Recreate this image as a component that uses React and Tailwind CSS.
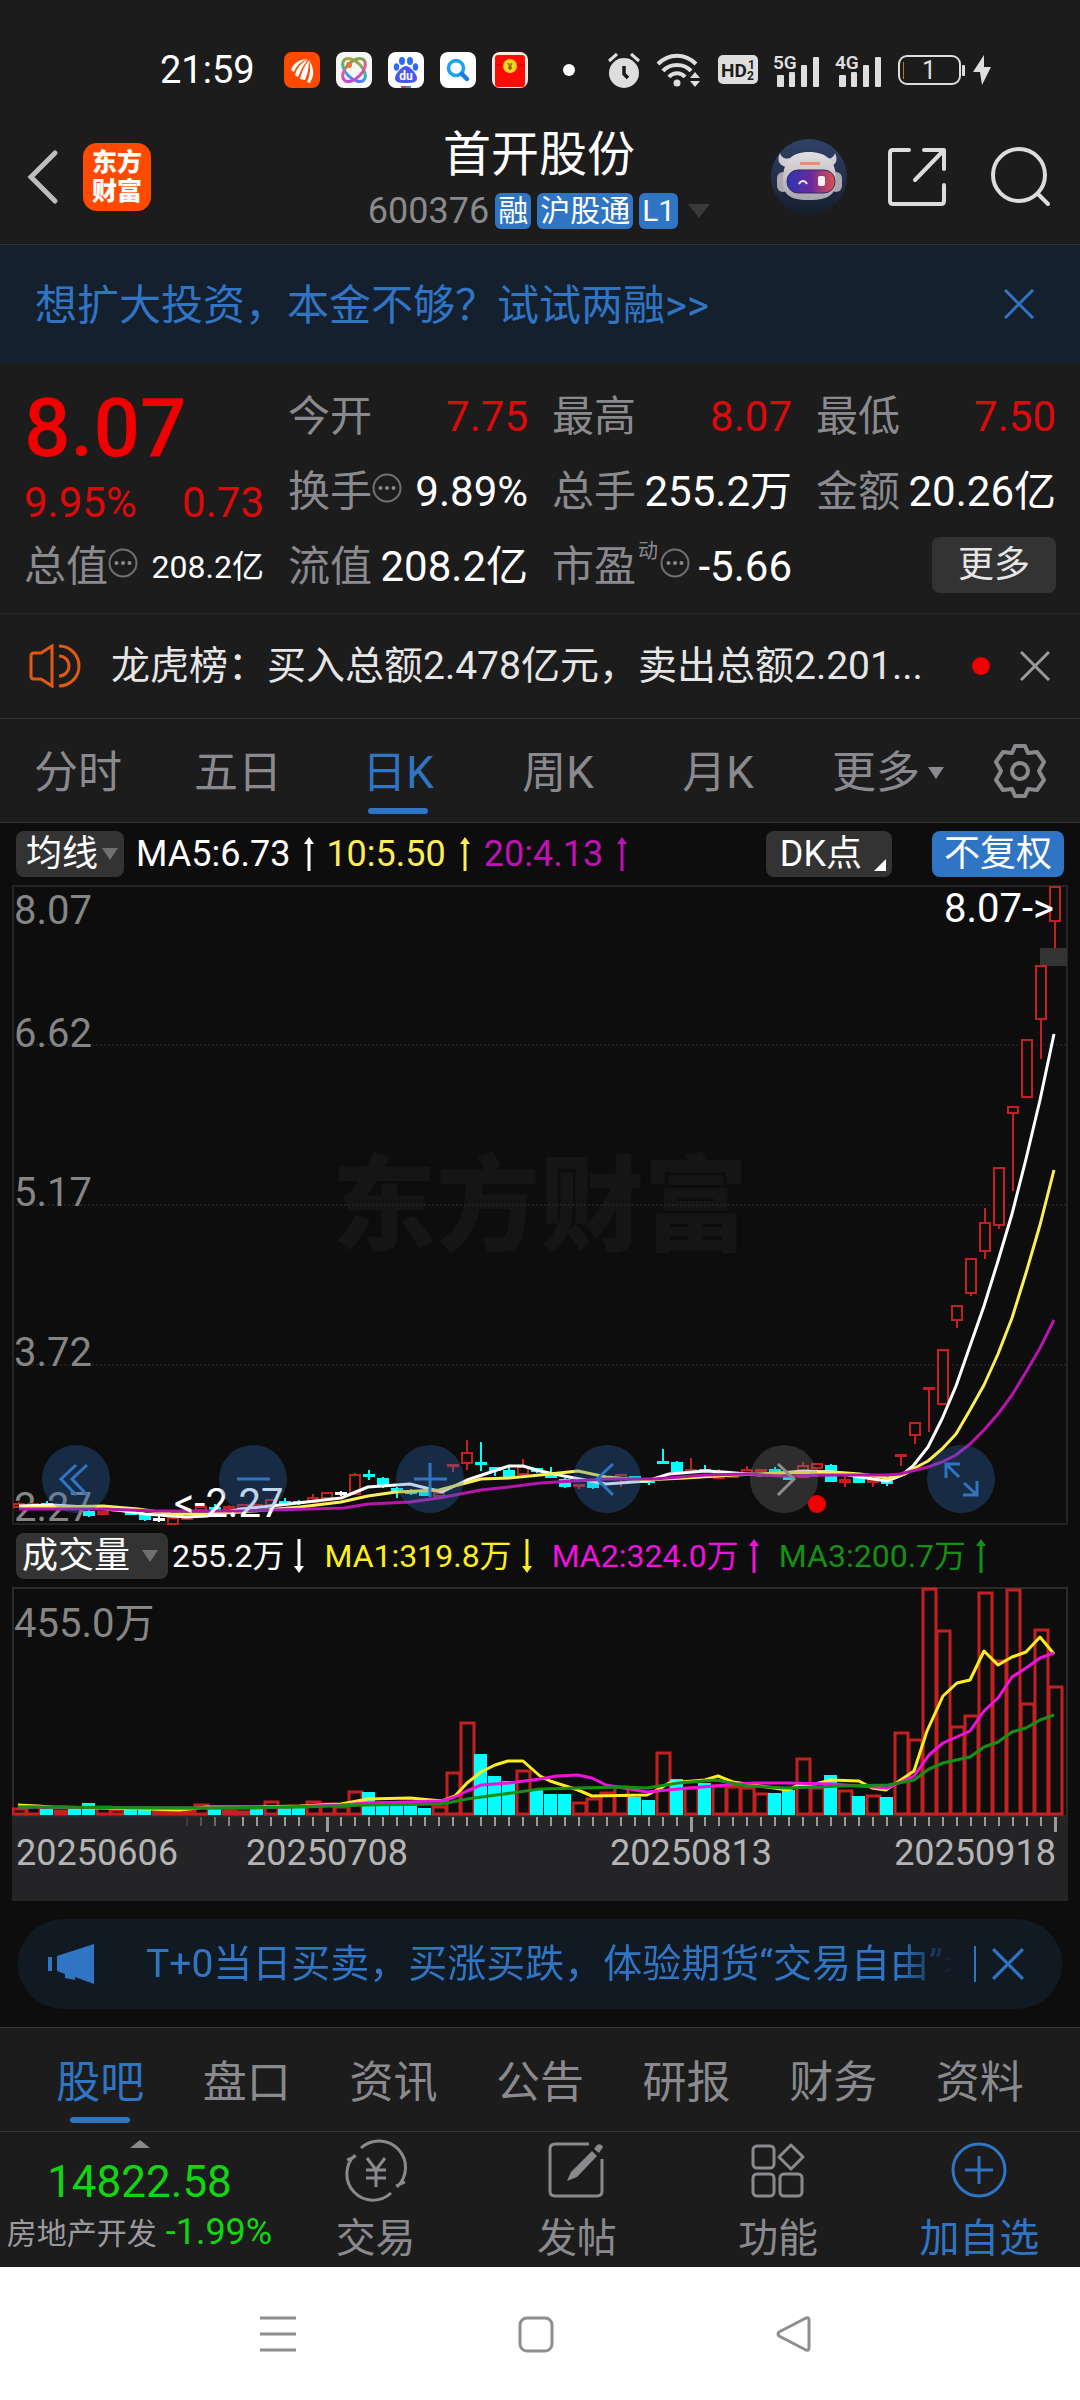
import React, { useState } from "react";

// Candles: kind (r = up, c = down, w = flat), body top, body bottom, high, low
const CANDLES = [
  ["r", 619, 622, 617, 623], ["r", 619, 620, 619, 621], ["c", 619, 620, 616, 621], ["r", 621, 622, 620, 623],
  ["r", 621, 622, 620, 623], ["c", 627, 630, 625, 632], ["r", 627, 629, 626, 630], ["r", 625, 626, 624, 627],
  ["c", 628, 629, 627, 630], ["c", 630, 634, 629, 636], ["w", 634, 635, 631, 637], ["r", 633, 639, 632, 639],
  ["r", 633, 634, 632, 635], ["r", 622, 625, 621, 626], ["c", 623, 624, 619, 626], ["r", 622, 624, 620, 625],
  ["r", 620, 623, 619, 624], ["r", 620, 622, 619, 623], ["r", 615, 620, 614, 621], ["c", 617, 618, 613, 620],
  ["c", 617, 618, 615, 620], ["r", 613, 617, 609, 618], ["r", 608, 613, 607, 613], ["w", 608, 609, 606, 611],
  ["r", 590, 609, 588, 610], ["c", 590, 591, 585, 595], ["c", 594, 599, 592, 603], ["c", 604, 607, 602, 613],
  ["c", 606, 608, 604, 610], ["c", 608, 610, 606, 611], ["r", 608, 611, 607, 612], ["r", 580, 581, 579, 587],
  ["r", 568, 578, 555, 585], ["c", 578, 579, 557, 586], ["c", 583, 585, 582, 591], ["c", 586, 592, 581, 592],
  ["r", 582, 589, 574, 590], ["c", 584, 586, 583, 588], ["c", 589, 592, 582, 593], ["c", 595, 601, 593, 603],
  ["r", 600, 601, 599, 604], ["c", 598, 602, 597, 604], ["r", 592, 594, 591, 595], ["r", 590, 594, 589, 602],
  ["c", 592, 594, 591, 595], ["c", 596, 597, 595, 600], ["c", 577, 578, 564, 579], ["c", 578, 586, 576, 586],
  ["r", 585, 586, 573, 586], ["c", 585, 586, 580, 587], ["r", 589, 593, 584, 594], ["r", 591, 592, 590, 593],
  ["r", 585, 588, 581, 588], ["r", 585, 586, 585, 587], ["c", 585, 586, 582, 588], ["c", 592, 594, 591, 595],
  ["r", 581, 592, 577, 593], ["r", 579, 583, 578, 592], ["c", 581, 596, 579, 597], ["r", 595, 597, 591, 602],
  ["c", 592, 597, 591, 598], ["r", 595, 597, 594, 602], ["c", 597, 598, 594, 601], ["r", 570, 571, 569, 581],
  ["r", 538, 550, 538, 559], ["r", 503, 504, 503, 547], ["r", 465, 519, 465, 519], ["r", 421, 435, 421, 443],
  ["r", 374, 408, 374, 411], ["r", 338, 366, 323, 374], ["r", 283, 340, 283, 344], ["r", 222, 228, 222, 306],
  ["r", 155, 212, 155, 212], ["r", 81, 134, 81, 174], ["r", 2, 36, 2, 63],
];

const VOLUMES = [
  7, 10, 6, 5, 6, 12, 9, 6, 5, 5, 4, 5, 5, 11, 6, 5, 4, 6, 14, 7, 7, 14, 12, 9, 24, 23, 13, 12, 10, 7, 9, 43, 93, 61,
  39, 34, 45, 26, 21, 21, 13, 17, 23, 29, 18, 15, 63, 36, 28, 32, 30, 29, 28, 22, 22, 25, 57, 28, 40, 25, 19, 20, 18,
  83, 76, 227, 185, 89, 100, 223, 155, 226, 112, 186, 129,
];
const DOWN_VOLUMES = [2, 4, 5, 8, 9, 14, 17, 19, 20, 25, 26, 27, 28, 29, 33, 34, 35, 37, 38, 39, 44, 45, 47, 49, 54, 55, 58, 60, 62];

const MA5 = "7,621 40,620 74,622 105,625 133,629 174,632 195,631 229,624 277,619 329,613 356,602 398,599 430,607 455,595 497,581 511,581 528,586 552,591 594,599 635,596 657,589 693,586 711,587 748,590 791,586 819,587 848,592 875,596 890,590 901,581 916,562 930,534 944,501 958,461 972,421 986,376 1000,329 1014,274 1028,215 1042,149";
const MA10 = "7,623 40,622 91,621 126,624 160,629 195,629 229,627 288,622 329,617 356,611 384,607 427,605 469,594 497,593 528,590 566,586 594,592 631,595 673,593 721,590 769,588 821,587 848,589 876,593 893,589 901,584 916,576 930,564 944,549 958,525 972,500 986,469 1000,433 1014,388 1028,340 1042,285";
const MA20 = "7,624 91,624 143,626 229,626 298,624 332,623 356,619 398,617 427,613 469,605 497,602 528,598 594,594 642,594 693,590 735,589 769,591 821,590 874,590 888,589 916,582 930,577 944,570 958,559 972,545 986,529 1000,510 1014,487 1028,463 1042,435";

const VMA1 = "6,218 40,220 136,222 167,223 195,220 246,220 288,219 329,217 356,212 398,211 430,214 443,209 455,196 469,185 483,178 496,174 511,174 528,189 538,194 566,203 580,209 635,208 649,201 657,196 693,193 706,189 721,195 748,199 776,203 786,198 803,197 819,193 847,194 860,201 874,203 902,184 915,144 931,109 945,96 958,93 972,64 986,78 1000,70 1014,65 1028,50 1042,67";
const VMA2 = "6,220 136,221 243,221 329,218 356,216 430,214 443,210 455,204 469,198 497,196 528,192 545,189 566,188 580,191 594,198 635,205 666,202 714,198 741,196 776,196 819,197 876,201 902,189 917,168 931,156 958,144 972,124 986,111 1000,90 1014,81 1028,71 1042,66";
const VMA3 = "6,220 195,221 288,220 356,218 430,217 455,212 477,209 528,202 607,200 635,201 666,196 704,193 735,199 776,201 831,199 876,198 902,193 917,182 931,176 958,170 972,160 986,155 1000,145 1014,141 1028,133 1042,128";

const COLORS = { r: "#c42020", c: "#00ffff", w: "#ffffff" };
const xAt = (i) => 7 + i * 14;

const CloseIcon = ({ size = 30, color = "#3074c4" }) => (
  <svg width={size} height={size} viewBox="0 0 30 30" fill="none" stroke={color} strokeWidth="3">
    <path d="M1 1L29 29M29 1L1 29" />
  </svg>
);

const MoreDot = () => (
  <svg className="mb-2 shrink-0" width="30" height="30" viewBox="0 0 30 30">
    <circle cx="15" cy="15" r="13.5" fill="none" stroke="#707074" strokeWidth="2" />
    <circle cx="8.5" cy="15" r="2" fill="#8a8a8e" />
    <circle cx="15" cy="15" r="2" fill="#8a8a8e" />
    <circle cx="21.5" cy="15" r="2" fill="#8a8a8e" />
  </svg>
);

const Caret = ({ className, up }) => (
  <svg className={className} viewBox="0 0 16 12" preserveAspectRatio="none" fill="currentColor">
    <path d={up ? "M0 12L8 0L16 12Z" : "M0 0L8 12L16 0Z"} />
  </svg>
);

const Arrow = ({ down }) => (
  <svg className="shrink-0" width="10" height="34" viewBox="0 0 10 34">
    {down ? (
      <path d="M3.5 0H6.5V27H10L5 34L0 27H3.5Z" fill="currentColor" />
    ) : (
      <path d="M3.5 34H6.5V7H10L5 0L0 7H3.5Z" fill="currentColor" />
    )}
  </svg>
);

const Signal = ({ label }) => (
  <svg className="overflow-visible" width="46" height="40" viewBox="0 0 46 40" fill="#dedede">
    <text x="-1" y="19" fontSize="19" fontWeight="600" fontFamily="Roboto, sans-serif">{label}</text>
    <rect x="3" y="25" width="7" height="12" rx="1" />
    <rect x="15" y="22" width="6" height="15" rx="1" />
    <rect x="27" y="15" width="6" height="22" rx="1" />
    <rect x="39" y="7" width="6" height="30" rx="1" />
  </svg>
);

const StatusBar = () => (
  <div className="flex items-center pt-[30px] h-[110px] pl-[160px] pr-[88px]">
    <span className="text-[38px] leading-[40px] text-white w-[124px]">21:59</span>
    <div className="flex items-center gap-4">
      <svg width="36" height="36" viewBox="0 0 36 36">
        <rect width="36" height="36" rx="8" fill="#ff4a00" />
        <path d="M7 18Q10 8 23 7Q13 11 10 20ZM11 23Q13 13 24 7Q18 15 14 25ZM16 27Q18 17 25 8Q25 19 21 28ZM23 30Q28 19 25 8Q33 20 26 31Z" fill="#fff" />
      </svg>
      <svg width="36" height="36" viewBox="0 0 36 36">
        <defs>
          <linearGradient id="swirl" x1="0" y1="0" x2="1" y2="1">
            <stop offset="0" stopColor="#ff8a1e" />
            <stop offset=".45" stopColor="#38c172" />
            <stop offset=".7" stopColor="#2aa6ea" />
            <stop offset="1" stopColor="#8a4df0" />
          </linearGradient>
          <linearGradient id="swirl2" x1="0" y1="1" x2="1" y2="0">
            <stop offset="0" stopColor="#b23ee8" />
            <stop offset=".5" stopColor="#e85aa0" />
            <stop offset="1" stopColor="#45cc30" />
          </linearGradient>
        </defs>
        <rect width="36" height="36" rx="8" fill="#f7f6f8" />
        <ellipse cx="18" cy="18" rx="14" ry="8" transform="rotate(46 18 18)" fill="none" stroke="url(#swirl)" strokeWidth="3" />
        <ellipse cx="18" cy="18" rx="14" ry="8" transform="rotate(-46 18 18)" fill="none" stroke="url(#swirl2)" strokeWidth="3" />
        <circle cx="13" cy="13" r="3" fill="#e8743a" />
      </svg>
      <svg width="36" height="36" viewBox="0 0 36 36">
        <rect width="36" height="36" rx="8" fill="#fff" />
        <g fill="#2b6cf0">
          <ellipse cx="14" cy="9" rx="3" ry="4" />
          <ellipse cx="22" cy="9" rx="3" ry="4" />
          <ellipse cx="8.5" cy="15" rx="2.7" ry="3.7" />
          <ellipse cx="27.5" cy="15" rx="2.7" ry="3.7" />
          <path d="M18 14C22 14 29 22 29 26C29 30 26 31 18 31C10 31 7 30 7 26C7 22 14 14 18 14Z" fill="#4a58ee" />
        </g>
        <text x="18" y="28" textAnchor="middle" fontSize="12" fontWeight="700" fill="#fff" fontFamily="Roboto, sans-serif">du</text>
        <rect x="13" y="34" width="5" height="2" fill="#c04848" />
        <rect x="18" y="34" width="5" height="2" fill="#4888c8" />
      </svg>
      <svg width="36" height="36" viewBox="0 0 36 36">
        <rect width="36" height="36" rx="8" fill="#fff" />
        <circle cx="16" cy="16" r="7.5" fill="none" stroke="#18a2f2" strokeWidth="3.5" />
        <path d="M22 22L27 27" stroke="#187ae8" strokeWidth="4.5" strokeLinecap="round" />
      </svg>
      <svg width="36" height="36" viewBox="0 0 36 36">
        <rect width="36" height="36" rx="8" fill="#ffe9e0" />
        <rect x="3" y="3" width="30" height="32" rx="3" fill="#fb0d05" />
        <path d="M3 13H33" stroke="#d80000" />
        <circle cx="18" cy="14" r="7" fill="#fbd81a" />
        <text x="18" y="18" textAnchor="middle" fontSize="9" fontWeight="700" fill="#8a5a00" fontFamily="Roboto, sans-serif">¥</text>
      </svg>
    </div>
    <div className="flex-1 flex items-center justify-end gap-4">
      <span className="w-3 h-3 rounded-full bg-white mr-[17px]" />
      <svg width="32" height="36" viewBox="0 0 32 36">
        <circle cx="16" cy="21" r="15" fill="#dedede" />
        <path d="M1 9L9 2M31 9L23 2" stroke="#dedede" strokeWidth="3" />
        <path d="M16 14V22L20 26" fill="none" stroke="#1c1c1c" strokeWidth="3.5" />
      </svg>
      <svg width="46" height="36" viewBox="0 0 46 36" fill="none" stroke="#dedede" strokeWidth="4">
        <path d="M2 12C13 1 29 1 40 12M7 19C14 11 28 11 35 19M13 25C17 20 25 20 29 25" />
        <circle cx="21" cy="31" r="3.5" fill="#dedede" stroke="none" />
        <path d="M34 26L39 20L44 26ZM34 29L39 35L44 29Z" fill="#dedede" stroke="none" />
      </svg>
      <svg width="40" height="30" viewBox="0 0 40 30" fontFamily="Roboto, sans-serif" fontWeight="700" fill="#1c1c1c">
        <rect width="40" height="29" rx="5" fill="#dedede" />
        <text x="3" y="22" fontSize="19">HD</text>
        <text x="30" y="14" fontSize="12">1</text>
        <text x="29" y="25" fontSize="12">2</text>
      </svg>
      <Signal label="5G" />
      <Signal label="4G" />
      <div className="flex items-center gap-[6px]">
        <svg width="68" height="32" viewBox="0 0 68 32">
          <rect x="1" y="2" width="61" height="28" rx="8" fill="none" stroke="#dedede" strokeWidth="2" />
          <rect x="5" y="8" width="1" height="17" fill="#b08020" />
          <rect x="64" y="11" width="3" height="11" rx="1" fill="#dedede" />
          <text x="31" y="25" textAnchor="middle" fontSize="25" fill="#dedede" fontFamily="Roboto, sans-serif">1</text>
        </svg>
        <svg width="20" height="32" viewBox="0 0 20 32">
          <path d="M12 1L1 18H8L10 31L19 13H12Z" fill="#dedede" />
        </svg>
      </div>
    </div>
  </div>
);

const Header = () => (
  <header className="grid grid-cols-[1fr_auto_1fr] items-center h-[135px] pl-[27px] pr-[29px] border-b border-[#333]">
    <div className="flex items-center gap-6">
      <button aria-label="返回">
        <svg width="32" height="56" viewBox="0 0 32 56" fill="none" stroke="#bdbdbd" strokeWidth="5" strokeLinecap="round">
          <path d="M28 4L4 28L28 52" />
        </svg>
      </button>
      <a href="#home" className="grid place-content-center w-[68px] h-[68px] rounded-[14px] bg-[#ff4a00] text-white text-[25px] leading-[29px] font-black">
        <span>东方</span>
        <span>财富</span>
      </a>
    </div>
    <div className="flex flex-col items-center gap-3 pt-1">
      <h1 className="text-[48px] leading-[52px] text-white">首开股份</h1>
      <div className="flex items-center gap-[6px] text-[30px] leading-9 text-white">
        <span className="text-[36px] text-[#8a8a8e]">600376</span>
        <span className="bg-[#3074c4] rounded-md px-[3px]">融</span>
        <span className="bg-[#3074c4] rounded-md px-[3px]">沪股通</span>
        <span className="bg-[#3074c4] rounded-md px-[3px]">L1</span>
        <Caret className="w-[22px] h-[14px] ml-1 text-[#3a3a3a]" />
      </div>
    </div>
    <div className="flex items-center justify-end gap-10">
      <button aria-label="智能助手">
        <svg width="76" height="76" viewBox="0 0 76 76">
          <defs>
            <linearGradient id="visor" x1="0" y1="0" x2="1" y2="0">
              <stop offset="0" stopColor="#2c35b0" />
              <stop offset=".5" stopColor="#6a2a9c" />
              <stop offset="1" stopColor="#e0504a" />
            </linearGradient>
            <linearGradient id="disc" x1="0" y1="0" x2="0" y2="1">
              <stop offset="0" stopColor="#30426a" />
              <stop offset="1" stopColor="#151d2c" />
            </linearGradient>
            <linearGradient id="shell" x1="0" y1="0" x2="0" y2="1">
              <stop offset="0" stopColor="#e2dfe2" />
              <stop offset="1" stopColor="#a9a5ad" />
            </linearGradient>
          </defs>
          <circle cx="38" cy="38" r="38" fill="url(#disc)" />
          <path d="M18 28C9 28 5 22 9 14C11 20 15 20 21 19ZM55 28C64 28 68 22 64 14C62 20 58 20 52 19Z" fill="#cfccd2" />
          <rect x="6" y="33" width="12" height="20" rx="6" fill="#aaa6b0" />
          <rect x="59" y="33" width="12" height="20" rx="6" fill="#aaa6b0" />
          <path d="M38 13C56 13 64 22 65 38C66 54 60 61 38 61C16 61 11 54 12 38C13 22 20 13 38 13Z" fill="url(#shell)" />
          <rect x="29" y="23" width="20" height="3" rx="1" fill="#d8946a" />
          <rect x="16" y="31" width="48" height="23" rx="11" fill="url(#visor)" stroke="#3a2a60" />
          <path d="M28 45C30 41 34 41 36 45" fill="none" stroke="#e4e4ff" strokeWidth="2" />
          <rect x="47" y="37" width="7" height="10" rx="2" fill="#fff0f4" />
        </svg>
      </button>
      <button aria-label="分享">
        <svg width="62" height="60" viewBox="0 0 62 60" fill="none" stroke="#dcdcdc" strokeWidth="4" strokeLinecap="round" strokeLinejoin="round">
          <path d="M22 3H6Q3 3 3 6V54Q3 57 6 57H54Q57 57 57 54V38M37 3H57V22M57 3L28 33" />
        </svg>
      </button>
      <button aria-label="搜索">
        <svg width="62" height="62" viewBox="0 0 62 62" fill="none" stroke="#dcdcdc" strokeWidth="4" strokeLinecap="round">
          <circle cx="30" cy="29" r="26" />
          <path d="M49 48L59 58" />
        </svg>
      </button>
    </div>
  </header>
);

const Stat = ({ label, value, info, sup, red, small }) => (
  <div className="flex items-center justify-between">
    <span className="flex items-center text-[#8a8a8e] whitespace-nowrap">
      {label}
      {sup && <sup className="text-[20px] leading-6 -top-4 px-[2px]">{sup}</sup>}
      {info && <MoreDot />}
    </span>
    <span className={`whitespace-nowrap ${red ? "text-[#dc0a0a]" : "text-white"} ${small ? "text-[32px]" : ""}`}>{value}</span>
  </div>
);

const Quote = () => (
  <section className="grid grid-cols-4 auto-rows-[75px] gap-x-6 px-6 pt-4 pb-[9px] text-[42px] leading-[52px] border-b border-[#282828]">
    <div className="row-span-2 flex flex-col pt-1">
      <strong className="text-[82px] leading-[90px] font-medium text-[#f00000]">8.07</strong>
      <div className="flex justify-between pt-1 text-[#dc0a0a]">
        <span>9.95%</span>
        <span>0.73</span>
      </div>
    </div>
    <Stat label="今开" value="7.75" red />
    <Stat label="最高" value="8.07" red />
    <Stat label="最低" value="7.50" red />
    <Stat label="换手" value="9.89%" info />
    <Stat label="总手" value="255.2万" />
    <Stat label="金额" value="20.26亿" />
    <Stat label="总值" value="208.2亿" info small />
    <Stat label="流值" value="208.2亿" />
    <Stat label="市盈" value="-5.66" sup="动" info />
    <button className="self-center justify-self-end w-[124px] h-14 mb-1 rounded-lg bg-[#333] text-[#e6e6e6] text-[36px]">更多</button>
  </section>
);

const PERIODS = ["分时", "五日", "日K", "周K", "月K", "更多"];

const PeriodTabs = () => {
  const [active, setActive] = useState("日K");
  return (
    <nav className="grid grid-cols-[repeat(6,4fr)_3fr] h-[104px] text-[44px] border-b border-[#333]">
      {PERIODS.map((name) => (
        <button
          key={name}
          onClick={() => setActive(name)}
          className={`relative flex items-center justify-center gap-2 pt-1 pr-1 ${name === active ? "text-[#3074c4]" : "text-[#8a8a8e]"} ${name === "更多" ? "pl-5" : ""}`}
        >
          {name}
          {name === "更多" && <Caret className="w-4 h-3" />}
          {name === active && <span className="absolute bottom-2 w-[60px] h-[6px] rounded-full bg-[#3074c4]" />}
        </button>
      ))}
      <button aria-label="设置" className="flex items-center justify-center">
        <svg width="56" height="56" viewBox="-28 -28 56 56" fill="none" stroke="#8a8a8e" strokeWidth="4" strokeLinejoin="round">
          <path d="M-5 -25H5L8 -18L17 -19L24 -9L19 0L24 9L17 19L8 18L5 25H-5L-8 18L-17 19L-24 9L-19 0L-24 -9L-17 -19L-8 -18Z" />
          <circle r="8" />
        </svg>
      </button>
    </nav>
  );
};

const PriceChart = () => (
  <svg viewBox="0 0 1056 640" className="block w-full overflow-visible" fontFamily="Roboto, sans-serif" fontSize="40">
    <text x="528" y="358" textAnchor="middle" fontSize="104" fontWeight="900" fill="#151515" fontFamily="'Noto Sans CJK SC', sans-serif">东方财富</text>
    <rect x="1" y="1" width="1054" height="638" fill="none" stroke="#242424" strokeWidth="2" />
    {[160, 320, 480].map((y) => (
      <path key={y} d={`M0 ${y}H1056`} stroke="#303030" strokeDasharray="2 2" />
    ))}
    <g fill="#858585">
      <text x="2" y="39">8.07</text>
      <text x="2" y="162">6.62</text>
      <text x="2" y="321">5.17</text>
      <text x="2" y="481">3.72</text>
      <text x="2" y="636">2.27</text>
    </g>
    <rect x="1028" y="63" width="27" height="18" fill="#333" />
    {CANDLES.map(([kind, top, bottom, high, low], i) => (
      <g key={i} stroke={COLORS[kind]} strokeWidth="2" fill={kind === "r" ? "#0d0d0d" : COLORS[kind]}>
        <path d={`M${xAt(i)} ${high}V${low}`} />
        <rect x={xAt(i) - 5} y={top} width="10" height={bottom - top} />
      </g>
    ))}
    <g fill="none" strokeWidth="3" strokeLinejoin="round">
      <polyline points={MA5} stroke="#ffffff" />
      <polyline points={MA10} stroke="#fdee58" />
      <polyline points={MA20} stroke="#b515ad" />
    </g>
    <g fill="#ffffff">
      <text x="1042" y="37" textAnchor="end">8.07-&gt;</text>
      <text x="162" y="632">&lt;-2.27</text>
    </g>
  </svg>
);

const VolumeChart = () => (
  <svg viewBox="0 0 1056 230" className="block w-full">
    <rect x="1" y="1" width="1054" height="228" fill="none" stroke="#2a2a2a" strokeWidth="2" />
    {VOLUMES.map((v, i) =>
      DOWN_VOLUMES.includes(i) ? (
        <rect key={i} x={xAt(i) - 7} y={228 - v} width="13" height={v} fill="#00ffff" />
      ) : (
        <rect key={i} x={xAt(i) - 6} y={229 - v} width="13" height={v - 2} fill="none" stroke="#c42020" strokeWidth="3" />
      )
    )}
    <g fill="none" strokeWidth="3" strokeLinejoin="round">
      <polyline points={VMA1} stroke="#fdee20" />
      <polyline points={VMA2} stroke="#ee12dc" />
      <polyline points={VMA3} stroke="#159015" />
    </g>
    <text x="2" y="50" fontSize="40" fill="#858585" fontFamily="Roboto, 'Noto Sans CJK SC', sans-serif">455.0万</text>
  </svg>
);

const DateAxis = () => (
  <svg viewBox="0 0 1056 84" className="block w-full bg-[#242426]" fontFamily="Roboto, sans-serif" fontSize="36">
    {CANDLES.map((_, i) => {
      if (i < 12) return null;
      const major = i === 22 || i === 48 || i === 74;
      return (
        <rect key={i} x={xAt(i) - 1} y="0" width={major ? 3 : 2} height={major ? 15 : 9} fill="#9a9a9a" opacity={Math.min(1, (i - 11) / 5)} />
      );
    })}
    <g fill="#b4b4b4">
      <text x="4" y="48">20250606</text>
      <text x="315" y="48" textAnchor="middle">20250708</text>
      <text x="679" y="48" textAnchor="middle">20250813</text>
      <text x="1044" y="48" textAnchor="end">20250918</text>
    </g>
  </svg>
);

const TOOLS = [
  { name: "最早", d: "M34 20L19 34L34 50M45 20L30 34L45 50" },
  { name: "缩小", d: "M18 34H51" },
  { name: "放大", d: "M18 34H51M34 18V52" },
  { name: "左移", d: "M40 19L24 34L40 50" },
  { name: "右移", d: "M28 19L44 34L28 50", off: true },
  { name: "全屏", d: "M19 33V19H33M19 19L32 32M50 36V50H36M50 50L37 38" },
];

const ChartTools = () => (
  <div className="absolute bottom-[12px] left-[30px] right-[73px] flex justify-between">
    {TOOLS.map((tool) => (
      <button
        key={tool.name}
        aria-label={tool.name}
        className={`relative w-[68px] h-[68px] rounded-full ${tool.off ? "bg-[#787878]/30" : "bg-[#3074c4]/30"}`}
      >
        <svg width="68" height="68" viewBox="0 0 68 68" fill="none" stroke={tool.off ? "#8e8e8e" : "#3074c4"} strokeWidth="3">
          <path d={tool.d} />
        </svg>
        {tool.off && <span className="absolute bottom-0 -right-2 w-[18px] h-[18px] rounded-full bg-[#f00000]" />}
      </button>
    ))}
  </div>
);

const ChartPanel = () => (
  <section className="bg-[#0d0d0d] px-3 pt-2 pb-[18px]">
    <div className="flex items-center justify-between pl-1 pr-1 mb-2 text-[36px] leading-[46px] text-white whitespace-nowrap">
      <div className="flex items-center gap-3">
        <button className="flex items-center gap-1 pl-[10px] pr-[6px] rounded-lg bg-[#333]">
          均线
          <Caret className="w-4 h-3 text-[#707070]" />
        </button>
        <span className="flex items-center gap-[14px]">MA5:6.73 <Arrow /></span>
        <span className="flex items-center gap-[14px] text-[#fdee58]">10:5.50 <Arrow /></span>
        <span className="flex items-center gap-[14px] pl-[2px] text-[#c012b4]">20:4.13 <Arrow /></span>
      </div>
      <div className="flex items-center gap-10">
        <button className="flex items-end gap-3 px-[14px] pr-[6px] rounded-lg bg-[#333]">
          DK点
          <svg className="mb-[6px]" width="12" height="12" viewBox="0 0 12 12">
            <path d="M12 0V12H0Z" fill="#fff" />
          </svg>
        </button>
        <button className="px-3 rounded-lg bg-[#3074c4]">不复权</button>
      </div>
    </div>
    <div className="relative">
      <PriceChart />
      <ChartTools />
    </div>
    <div className="flex items-center gap-1 pl-1 my-2 text-[32px] leading-[46px] text-white whitespace-nowrap">
      <button className="flex items-center gap-3 pl-[6px] pr-[10px] rounded-lg bg-[#333] text-[36px]">
        成交量
        <Caret className="w-4 h-3 text-[#707070]" />
      </button>
      <div className="flex items-center gap-5">
        <span className="flex items-center gap-[10px]">255.2万 <Arrow down /></span>
        <span className="flex items-center gap-[10px] text-[#fdee20]">MA1:319.8万 <Arrow down /></span>
        <span className="flex items-center gap-[10px] text-[#ee12dc]">MA2:324.0万 <Arrow /></span>
        <span className="flex items-center gap-[10px] text-[#159015]">MA3:200.7万 <Arrow /></span>
      </div>
    </div>
    <VolumeChart />
    <DateAxis />
    <div className="flex items-center h-[90px] mt-[18px] mx-[6px] pl-[30px] pr-[38px] rounded-full bg-[#111a23] text-[#3074c4]">
      <svg className="mr-[52px] shrink-0" width="46" height="40" viewBox="0 0 46 40" fill="#3074c4">
        <rect x="0" y="13" width="4" height="14" />
        <path d="M9 12L46 0V40L27 33V36L17 34V30L9 27Z" />
      </svg>
      <a href="#futures" className="flex-1 min-w-0 overflow-hidden whitespace-nowrap text-[39px] leading-[52px] [mask-image:linear-gradient(to_right,black_92%,transparent_99%)]">
        T+0当日买卖，买涨买跌，体验期货“交易自由”&gt;&gt;
      </a>
      <span className="w-[2px] h-9 ml-3 mr-4 bg-[#3074c4]" />
      <button aria-label="关闭"><CloseIcon size={32} /></button>
    </div>
  </section>
);

const SECTIONS = ["股吧", "盘口", "资讯", "公告", "研报", "财务", "资料"];

const SectionTabs = () => (
  <nav className="flex h-[105px] px-[27px] text-[44px] border-y border-[#333]">
    {SECTIONS.map((name, i) => (
      <a
        key={name}
        href={`#tab-${i}`}
        className={`relative flex-1 flex items-center justify-center pt-[6px] ${i === 0 ? "text-[#3074c4]" : "text-[#8a8a8e]"}`}
      >
        {name}
        {i === 0 && <span className="absolute bottom-2 w-[60px] h-[6px] rounded-full bg-[#3074c4]" />}
      </a>
    ))}
  </nav>
);

const ACTIONS = [
  {
    name: "交易",
    icon: (
      <>
        <path d="M17 7A26 26 0 0 1 53 46M47 52A26 26 0 0 1 11 14M12 15L3 19M52 45L61 41" />
        <path d="M23 17L32 29L41 17M32 29V46M22 29H42M22 37H42" />
      </>
    ),
  },
  {
    name: "发帖",
    icon: (
      <>
        <path d="M44 3H10Q5 3 5 8V50Q5 55 10 55H52Q57 55 57 50V18" />
        <path d="M52 4Q56 2 58 6L54 12L49 8ZM47 10L52 15L32 36L22 40L26 31Z" fill="currentColor" stroke="none" />
      </>
    ),
  },
  {
    name: "功能",
    icon: (
      <>
        <rect x="7" y="5" width="21" height="22" rx="4" />
        <rect x="7" y="33" width="21" height="22" rx="4" />
        <rect x="34" y="33" width="22" height="22" rx="4" />
        <path d="M45 4L57 16L45 28L33 16Z" strokeLinejoin="round" />
      </>
    ),
  },
  {
    name: "加自选",
    blue: true,
    icon: (
      <>
        <circle cx="32" cy="29" r="26" />
        <path d="M18 29H46M32 15V43" />
      </>
    ),
  },
];

const BottomBar = () => (
  <div className="flex pb-[2px]">
    <a href="#index" className="w-[275px] flex flex-col items-center pt-2 pl-1 whitespace-nowrap">
      <Caret up className="w-5 h-2 text-[#8a8a8e]" />
      <span className="text-[44px] leading-[52px] pt-2 text-[#12d412]">14822.58</span>
      <span className="text-[36px] leading-[48px] text-[#12d412]">
        <span className="text-[30px] text-[#9a9a9e]">房地产开发</span> -1.99%
      </span>
    </a>
    {ACTIONS.map((item) => (
      <button key={item.name} className={`flex-1 flex flex-col items-center pt-[9px] text-[40px] leading-[52px] ${item.blue ? "text-[#3074c4]" : "text-[#8a8a8e]"}`}>
        <svg className="mb-[14px] overflow-visible" width="64" height="58" viewBox="0 0 64 58" fill="none" stroke="currentColor" strokeWidth="3">
          {item.icon}
        </svg>
        {item.name}
      </button>
    ))}
  </div>
);

const SystemNav = () => (
  <div className="flex-1 flex items-center justify-center gap-[222px] pr-2 min-h-[132px] bg-white">
    <button aria-label="最近任务">
      <svg width="36" height="38" viewBox="0 0 36 38" stroke="#8e8e8e" strokeWidth="3">
        <path d="M0 3H36M0 19H36M0 35H36" />
      </svg>
    </button>
    <button aria-label="主屏幕">
      <svg width="36" height="38" viewBox="0 0 36 38" fill="none" stroke="#8e8e8e" strokeWidth="3">
        <rect x="2" y="3" width="32" height="33" rx="7" />
      </svg>
    </button>
    <button aria-label="后退">
      <svg width="36" height="38" viewBox="0 0 36 38" fill="none" stroke="#8e8e8e" strokeWidth="3" strokeLinejoin="round">
        <path d="M3 17L30 3Q33 2 33 5V33Q33 36 30 35L3 21Q1 19 3 17Z" />
      </svg>
    </button>
  </div>
);

const App = () => {
  return (
    <div className="min-h-screen flex flex-col bg-[#1c1c1c] font-[Roboto,'Noto_Sans_CJK_SC',sans-serif]" lang="zh-CN">
      <StatusBar />
      <Header />
      <div className="flex items-center justify-between h-[118px] pl-[35px] pr-[46px] bg-[#14202e] text-[#3074c4]">
        <a href="#margin" className="pt-1 text-[42px] leading-[52px]">想扩大投资，本金不够？试试两融&gt;&gt;</a>
        <button aria-label="关闭"><CloseIcon /></button>
      </div>
      <Quote />
      {/* News ticker */}
      <div className="flex items-center h-[105px] pl-[29px] pr-[30px] border-b border-[#333]">
        <svg className="mr-[30px] shrink-0" width="52" height="44" viewBox="0 0 52 44" fill="none" stroke="#e05a14" strokeWidth="3">
          <path d="M23 2L12 9H5Q2 9 2 12V32Q2 35 5 35H12L23 42Z" />
          <path d="M30 2A20 20 0 0 1 30 42M30 12A10 10 0 0 1 30 32" />
        </svg>
        <a href="#news" className="flex-1 whitespace-nowrap text-[39px] leading-[52px] text-[#e6e6e6]">
          龙虎榜：买入总额2.478亿元，卖出总额2.201...
        </a>
        <span className="w-[18px] h-[18px] rounded-full bg-[#f00000] mr-[30px]" />
        <button aria-label="关闭"><CloseIcon color="#9a9a9a" /></button>
      </div>
      <PeriodTabs />
      <ChartPanel />
      <SectionTabs />
      <BottomBar />
      <SystemNav />
    </div>
  );
};

export default App;
